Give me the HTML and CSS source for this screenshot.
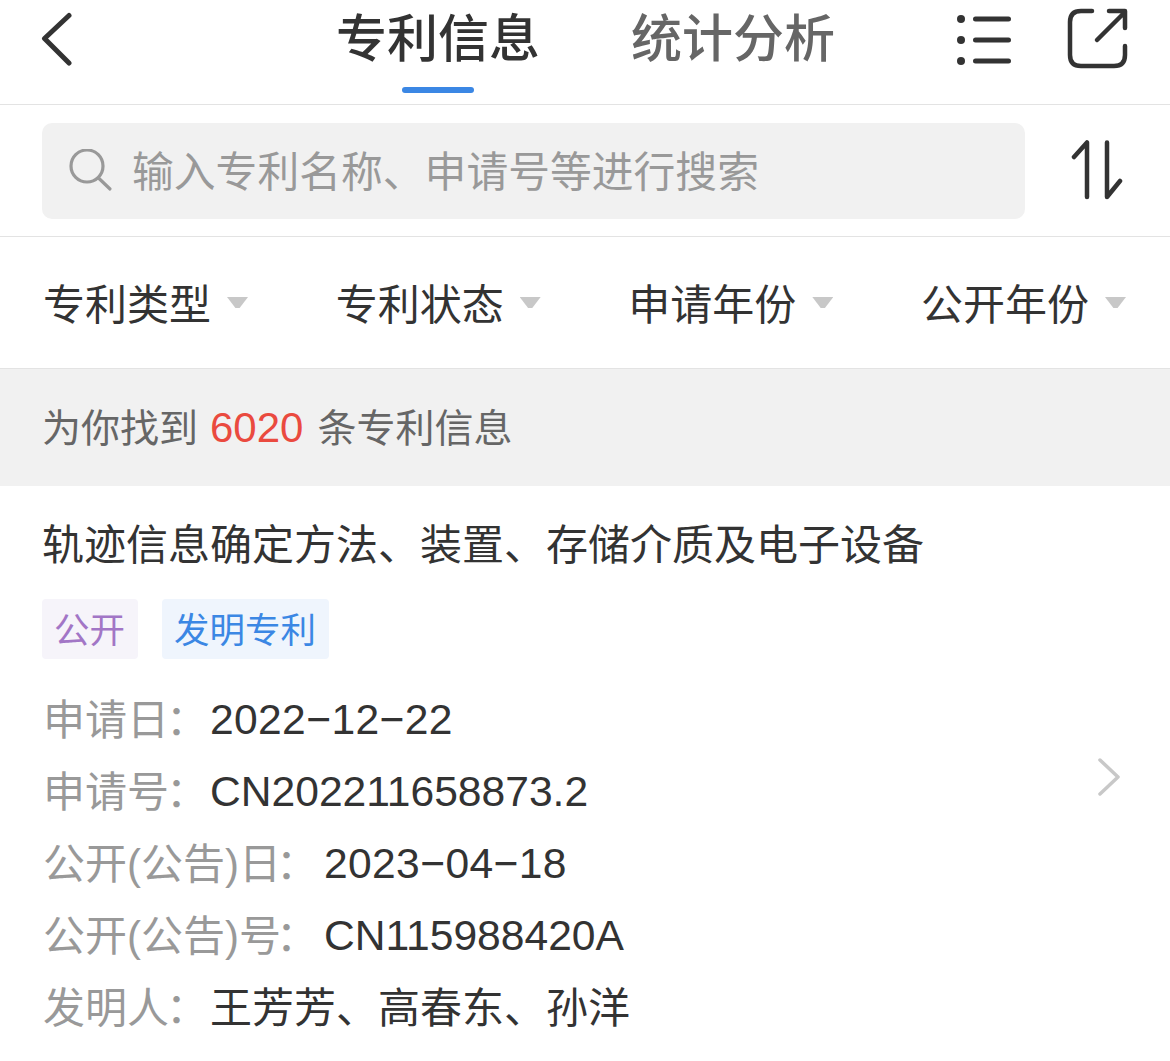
FILE: index.html
```html
<!DOCTYPE html>
<html lang="zh-CN">
<head>
<meta charset="UTF-8">
<meta name="viewport" content="width=device-width, initial-scale=1.0">
<title>专利信息</title>
<link rel="stylesheet" href="styles.css">
</head>
<body>
<header class="topbar">
    <svg class="back-icon" width="36" height="60" viewBox="0 0 36 60">
        <path d="M28 4.5 L3.5 27.5 L28 52" />
    </svg>
    <nav class="tabs">
        <div class="tab tab-active">专利信息</div>
        <div class="tab">统计分析</div>
    </nav>
    <svg class="list-icon" width="58" height="54" viewBox="0 0 58 54">
        <circle cx="6" cy="5" r="4" />
        <circle cx="6" cy="26" r="4" />
        <circle cx="6" cy="47" r="4" />
        <path d="M20.5 5 H53.5 M20.5 26 H53.5 M20.5 47 H53.5" />
    </svg>
    <svg class="share-icon" width="62" height="62" viewBox="0 0 62 62">
        <path d="M25 3 H14 Q3 3 3 14 V47 Q3 58 14 58 H47 Q58 58 58 47 V38" />
        <path d="M30 32 L58 4 M42 3 H58 V20" />
    </svg>
</header>

<section class="search-row">
    <div class="search-box">
        <svg class="search-icon" width="44" height="44" viewBox="0 0 44 44">
            <circle cx="18" cy="17" r="16" />
            <path d="M29.5 29 L41 40" />
        </svg>
        <span class="search-text">输入专利名称、申请号等进行搜索</span>
    </div>
    <svg class="sort-icon" width="52" height="60" viewBox="0 0 52 60">
        <path d="M3 17 L16 2.5 V57 M36 2.5 V57 L49 41" />
    </svg>
</section>

<section class="filters">
    <div class="filter"><span>专利类型</span><i class="caret"></i></div>
    <div class="filter"><span>专利状态</span><i class="caret"></i></div>
    <div class="filter"><span>申请年份</span><i class="caret"></i></div>
    <div class="filter"><span>公开年份</span><i class="caret"></i></div>
</section>

<div class="count-bar"><span>为你找到</span><em>6020</em><span>条专利信息</span></div>

<article class="patent">
    <h2 class="patent-title">轨迹信息确定方法、装置、存储介质及电子设备</h2>
    <div class="tags">
        <span class="tag tag-purple">公开</span>
        <span class="tag tag-blue">发明专利</span>
    </div>
    <div class="meta">
        <div class="meta-row"><span class="meta-label w-short">申请日<b class="colon">：</b></span><span class="date">2022−12−22</span></div>
        <div class="meta-row"><span class="meta-label w-short">申请号<b class="colon">：</b></span><span>CN202211658873.2</span></div>
        <div class="meta-row"><span class="meta-label w-long">公开(公告)日<b class="colon">：</b></span><span class="date">2023−04−18</span></div>
        <div class="meta-row"><span class="meta-label w-long">公开(公告)号<b class="colon">：</b></span><span>CN115988420A</span></div>
        <div class="meta-row"><span class="meta-label w-short">发明人<b class="colon">：</b></span><span class="names">王芳芳、高春东、孙洋</span></div>
    </div>
    <svg class="chevron" width="24" height="40" viewBox="0 0 24 40">
        <path d="M3 3 L21 20 L3 37" />
    </svg>
</article>
</body>
</html>
```

FILE: styles.css
```css
* {
    box-sizing: border-box;
}

html,
body {
    height: 100%;
}

body {
    margin: 0;
    background: #fff;
    color: #333;
    font-family: "Liberation Sans", "Noto Sans CJK SC", sans-serif;
    overflow: hidden;
}

svg {
    display: block;
    fill: none;
    flex: none;
}

.topbar {
    position: relative;
    height: 105px;
    padding: 8px 41px 0;
    display: flex;
    align-items: flex-start;
    border-bottom: 1px solid #e3e3e3;
}

.back-icon {
    margin-top: 3px;
    stroke: #333;
    stroke-width: 5;
    stroke-linecap: round;
    stroke-linejoin: round;
}

.tabs {
    margin-left: 259px;
    margin-top: 2px;
    display: flex;
    gap: 91px;
}

.tab {
    position: relative;
    font-size: 51px;
    line-height: 60px;
    font-weight: 500;
    color: #666;
}

.tab-active {
    color: #333;
}

.tab-active::after {
    content: "";
    position: absolute;
    left: 66px;
    top: 77px;
    width: 72px;
    height: 6px;
    border-radius: 3px;
    background: #3b87e4;
}

.list-icon {
    margin-left: 120px;
    margin-top: 6px;
    fill: #333;
}

.list-icon path {
    fill: none;
    stroke: #333;
    stroke-width: 5;
    stroke-linecap: round;
}

.share-icon {
    margin-left: 54px;
    stroke: #333;
    stroke-width: 4.5;
    stroke-linecap: round;
    stroke-linejoin: round;
}

.search-row {
    height: 132px;
    padding: 18px 47px 0 42px;
    display: flex;
    align-items: flex-start;
    border-bottom: 1px solid #e3e3e3;
}

.search-box {
    width: 984px;
    height: 96px;
    padding-left: 27px;
    display: flex;
    align-items: center;
    gap: 19px;
    border-radius: 10px;
    background: #f1f1f1;
}

.search-icon {
    stroke: #999;
    stroke-width: 3.2;
    stroke-linecap: round;
}

.search-text {
    font-size: 41.8px;
    margin-bottom: 4px;
    color: #999;
}

.sort-icon {
    margin: 17px 0 0 46px;
    stroke: #333;
    stroke-width: 4.5;
    stroke-linecap: round;
    stroke-linejoin: round;
}

.filters {
    height: 132px;
    padding: 0 44px 0 43px;
    display: flex;
    align-items: center;
    justify-content: space-between;
    border-bottom: 1px solid #e3e3e3;
}

.filter {
    display: flex;
    align-items: center;
    gap: 16px;
    font-size: 42px;
    color: #333;
}

.filter span {
    margin-bottom: 2px;
}

.caret {
    width: 21px;
    height: 11px;
    background: #c8c8c8;
    clip-path: polygon(0 0, 100% 0, 60% 100%, 40% 100%);
}

.count-bar {
    height: 117px;
    padding-left: 42px;
    display: flex;
    align-items: center;
    background: #f1f1f1;
    font-size: 39px;
    color: #666;
}

.count-bar span {
    margin-bottom: 6px;
}

.count-bar em {
    margin: 0 14px 0 12px;
    font-size: 42px;
    font-style: normal;
    color: #ea4a3f;
}

.patent {
    position: relative;
    padding: 30px 42px 0;
}

.patent-title {
    margin: 0;
    font-size: 42px;
    line-height: 60px;
    font-weight: 400;
    color: #333;
}

.tags {
    margin-top: 23px;
    display: flex;
    gap: 24px;
}

.tag {
    height: 60px;
    padding: 0 13px 4px 12px;
    display: flex;
    align-items: center;
    border-radius: 4px;
    font-size: 35.5px;
}

.tag-purple {
    color: #a276c6;
    background: #f6f4fa;
}

.tag-blue {
    color: #3b87e4;
    background: #eff5fd;
}

.meta {
    margin-top: 24px;
    margin-left: 1px;
}

.meta-row {
    height: 72px;
    display: flex;
    align-items: center;
    font-size: 42.6px;
    color: #333;
}

.meta-label {
    margin-bottom: 5px;
    font-size: 42px;
    color: #999;
    white-space: nowrap;
}

.colon {
    font-family: "Noto Sans CJK TC", sans-serif;
    font-weight: 400;
}

.w-short {
    width: 167px;
}

.w-short .colon {
    margin-left: -3px;
}

.w-long {
    width: 281px;
}

.w-long .colon {
    margin-left: -5px;
}

.date {
    letter-spacing: 0.35px;
}

.names {
    margin-bottom: 5px;
    font-size: 42px;
}

.chevron {
    position: absolute;
    right: 49px;
    top: 271px;
    stroke: #c8c8c8;
    stroke-width: 3.5;
    stroke-linecap: round;
    stroke-linejoin: round;
}
```
